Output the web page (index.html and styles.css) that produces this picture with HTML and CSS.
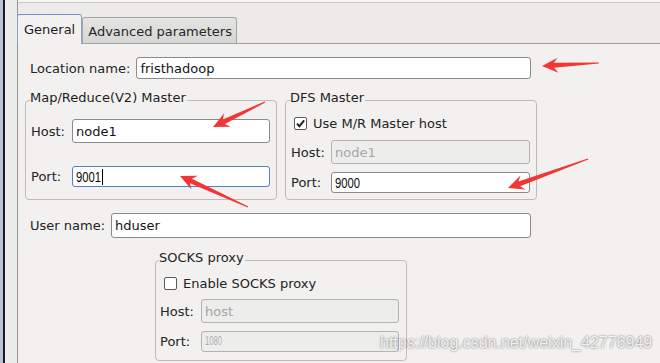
FILE: index.html
```html
<!DOCTYPE html>
<html>
<head>
<meta charset="utf-8">
<link rel="stylesheet" href="styles.css">
</head>
<body>
<div class="window">
  <div class="edge"></div>
  <div class="gutter"></div>
  <div class="main">
    <div class="topstrip"></div>
    <div class="tabbar">
      <div class="tab tab-active">General</div>
      <div class="tab tab-idle">Advanced parameters</div>
    </div>
    <div class="panel">
      <div class="row row-location">
        <span class="label">Location name:</span>
        <div class="entry entry-location">fristhadoop</div>
      </div>

      <div class="groups">
        <fieldset class="group group-mr">
          <legend>Map/Reduce(V2) Master</legend>
          <div class="frow frow-host">
            <span class="flabel">Host:</span>
            <div class="entry">node1</div>
          </div>
          <div class="frow frow-port frow-gap-lg">
            <span class="flabel">Port:</span>
            <div class="entry entry-focus"><span class="digits">9001</span><span class="caret"></span></div>
          </div>
        </fieldset>

        <fieldset class="group group-dfs">
          <legend>DFS Master</legend>
          <div class="check-row">
            <span class="checkbox">
              <svg width="13" height="13" viewBox="0 0 13 13"><path d="M3 6.6 L5.4 9.2 L10.2 3.4" fill="none" stroke="#1e1e1e" stroke-width="1.9"/></svg>
            </span>
            <span>Use M/R Master host</span>
          </div>
          <div class="frow frow-host frow-gap-sm">
            <span class="flabel">Host:</span>
            <div class="entry entry-disabled">node1</div>
          </div>
          <div class="frow frow-port frow-gap-xs">
            <span class="flabel">Port:</span>
            <div class="entry"><span class="digits">9000</span></div>
          </div>
        </fieldset>
      </div>

      <div class="row row-user">
        <span class="label">User name:</span>
        <div class="entry entry-user">hduser</div>
      </div>

      <fieldset class="group group-socks">
        <legend>SOCKS proxy</legend>
        <div class="check-row">
          <span class="checkbox"></span>
          <span>Enable SOCKS proxy</span>
        </div>
        <div class="frow frow-host frow-gap-xs">
          <span class="flabel">Host:</span>
          <div class="entry entry-disabled">host</div>
        </div>
        <div class="frow frow-port frow-gap-xs">
          <span class="flabel">Port:</span>
          <div class="entry entry-disabled"><span class="digits digits-small">1080</span></div>
        </div>
      </fieldset>
    </div>
  </div>
</div>

<svg class="arrows" width="660" height="363" viewBox="0 0 660 363">
  <polygon points="598.97,62.4 553.85,62.87 557.59,57.67 542,66 558.37,72.65 554.11,67.87 599.03,63.6"/>
  <polygon points="264.74,101.46 222.73,119.55 224.17,113.31 213,127 230.67,126.83 224.89,124.05 265.26,102.54"/>
  <polygon points="248.25,206.45 191.96,178.7 197.67,175.81 180,176 191.45,189.47 189.88,183.26 247.75,207.55"/>
  <polygon points="587.8,158.44 518.43,181.56 520.48,175.49 508,188 525.6,189.59 520.13,186.26 588.2,159.56"/>
</svg>

<div class="watermark">https://blog.csdn.net/weixin_42776949</div>
</body>
</html>
```

FILE: styles.css
```css
html, body {
  margin: 0;
  padding: 0;
}

body {
  width: 660px;
  height: 363px;
  overflow: hidden;
  position: relative;
  background: #f2f1f0;
  font-family: "DejaVu Sans", sans-serif;
  font-size: 13px;
  line-height: 15px;
  color: #232323;
}

.window {
  display: flex;
  height: 363px;
}

.edge {
  width: 3px;
  flex: none;
  background: #b8c3da;
  border-right: 2px solid #1a1a1a;
}

.gutter {
  width: 12px;
  flex: none;
  background: #ebebea;
  border-right: 1px solid #979797;
}

.main {
  flex: 1;
  display: flex;
  flex-direction: column;
  min-width: 0;
}

.topstrip {
  height: 2px;
  background: #f7f7f6;
}

.tabbar {
  display: flex;
  align-items: flex-end;
  height: 40px;
  border-top: 1px solid #c8c8c8;
  border-bottom: 1px solid #a2a2a2;
  background: #ecebea;
}

.tab {
  flex: none;
  border: 1px solid #a6a6a6;
  border-bottom: none;
  border-radius: 3px 3px 0 0;
  white-space: nowrap;
}

.tab-active {
  margin-left: -1px;
  margin-bottom: -1px;
  padding: 7px 6px 7px 6px;
  background: #f2f1f0;
  border-color: #8fa3bf;
  border-top-color: #6f93c4;
  color: #1c1c1c;
}

.tab-idle {
  padding: 6px 4px 4px 5px;
  background: linear-gradient(#e5e5e4, #d6d6d5);
  color: #262626;
}

.panel {
  padding: 13px 0 0 12px;
}

.row {
  display: flex;
  align-items: center;
  gap: 6px;
}

.row-user {
  margin-top: 13px;
}

.label {
  white-space: nowrap;
}

.entry {
  box-sizing: border-box;
  display: flex;
  align-items: center;
  border: 1px solid #8b8b8b;
  border-radius: 3px;
  background: #ffffff;
  padding: 0 3px;
  color: #141414;
  white-space: nowrap;
  overflow: hidden;
}

.entry-location {
  width: 395px;
  height: 22px;
}

.entry-user {
  width: 420px;
  height: 25px;
}

.entry-disabled {
  background: #ededec;
  border-color: #b3b3b3;
  color: #a6a6a6;
}

.entry-focus {
  border-color: #5580bd;
}

.digits {
  display: inline-block;
  font-family: "Liberation Sans", sans-serif;
  font-size: 15px;
  line-height: 15px;
  transform: scaleX(0.75);
  transform-origin: 0 50%;
  margin-right: -8px;
  color: #0a0a0a;
}

.digits-small {
  font-size: 12px;
  transform: scaleX(0.64);
  color: #adadad;
}

.caret {
  display: inline-block;
  width: 1px;
  height: 16px;
  margin-left: 1px;
  background: #000;
}

.groups {
  display: flex;
  gap: 8px;
  margin: 11px 0 0 -5px;
}

.group {
  box-sizing: border-box;
  width: 252px;
  min-width: 0;
  margin: 0;
  border: 1px solid #bcbcbc;
  border-radius: 4px;
}

.group legend {
  padding: 0 1px 6px 0;
  margin-left: -1px;
  line-height: 15px;
  color: #1e1e1e;
}

.group-mr {
  padding: 8px 6px 12px 5px;
}

.group-dfs {
  padding: 4px 6px 6px 5px;
}

.group-socks {
  margin: 12px 0 0 125px;
  padding: 4px 7px 8px 4px;
}

.frow {
  display: flex;
  align-items: center;
  gap: 5px;
}

.frow .entry {
  flex: 1;
  height: 100%;
}

.frow-host {
  height: 24px;
}

.frow-port {
  height: 21px;
}

.frow-gap-lg {
  margin-top: 23px;
}

.frow-gap-sm {
  margin-top: 9px;
}

.frow-gap-xs {
  margin-top: 8px;
}

.flabel {
  width: 36px;
  flex: none;
}

.group-dfs .flabel {
  width: 35px;
}

.check-row {
  display: flex;
  align-items: center;
  gap: 6px;
  height: 16px;
  padding-left: 3px;
}

.group-socks .check-row {
  padding-left: 4px;
}

.checkbox {
  box-sizing: border-box;
  width: 13px;
  height: 13px;
  flex: none;
  border: 1px solid #5a5a5a;
  border-radius: 2px;
  background: #fff;
  position: relative;
}

.checkbox svg {
  position: absolute;
  left: -1px;
  top: -1px;
}

.arrows {
  position: absolute;
  left: 0;
  top: 0;
  pointer-events: none;
}

.arrows polygon {
  fill: #f23636;
}

.watermark {
  position: absolute;
  left: 380px;
  top: 334px;
  font-family: "Liberation Sans", sans-serif;
  font-size: 16px;
  line-height: 18px;
  color: rgba(255, 255, 255, 0.88);
  text-shadow: 0 0 2px rgba(80, 80, 80, 0.9);
  white-space: nowrap;
}
```
